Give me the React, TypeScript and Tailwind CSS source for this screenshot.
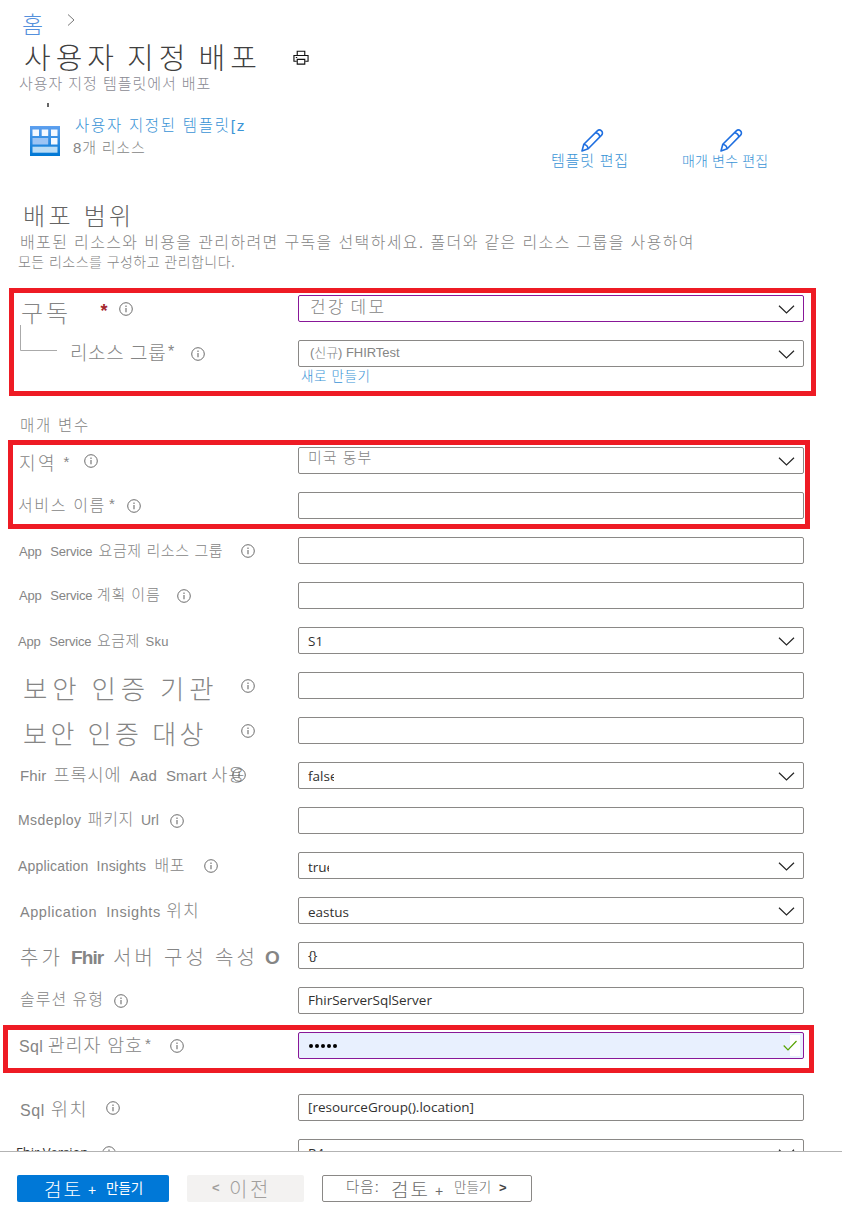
import React from "react";

type NodeProps = { children?: React.ReactNode; cls?: string };

function Txt({ children, cls = "" }: NodeProps) {
  return <span className={"block shrink-0 whitespace-pre leading-[20px] " + cls}>{children}</span>;
}

function Info({ cls = "" }: { cls?: string }) {
  return (
    <svg className={"size-[14px] shrink-0 " + cls} viewBox="0 0 14 14" fill="none">
      <circle cx="7" cy="7" r="6.3" stroke="#6c6c6c" strokeWidth="1" />
      <path d="M7 6v4.300M7 3.600v1.300" stroke="#6c6c6c" strokeWidth="1.100" />
    </svg>
  );
}

function Pencil({ cls = "" }: { cls?: string }) {
  return (
    <svg className={"h-[23px] w-[23px] shrink-0 " + cls} viewBox="0 0 23 23" fill="none" stroke="#1f6fe0" strokeWidth="1.600" strokeLinejoin="round">
      <path d="M1 22l1.800-6.800L16.300 1.900c1.200-1.200 3-1.100 4.200 0s1.300 3 .1 4.200L7.200 19.800z" />
      <path d="M14.500 3.800c2.600.4 4 1.800 4.300 4.200M2.800 15.200c2.600.5 4 2 4.400 4.600" />
    </svg>
  );
}

function Field({ children, select, cls = "border-[#8a8886]" }: NodeProps & { select?: boolean }) {
  return (
    <div className={"flex h-[27px] w-[506px] shrink-0 items-start rounded-[2px] border pl-[9px] font-['Open_Sans','Liberation_Sans',sans-serif] font-normal text-[#323130] " + cls}>
      <div className="flex min-w-0 grow">{children}</div>
      {select && (
        <svg className="mt-[9px] mr-[8px] h-[9px] w-[17px] shrink-0" viewBox="0 0 17 9" fill="none">
          <path d="M1 .8l7.500 7.200L16 .8" stroke="#252525" strokeWidth="1.200" />
        </svg>
      )}
    </div>
  );
}

function Row({ label, children, cls = "h-[45px]" }: NodeProps & { label?: React.ReactNode }) {
  return (
    <div className={"flex shrink-0 items-start " + cls}>
      <div className="flex w-[298px] shrink-0 items-start">{label}</div>
      {children}
    </div>
  );
}

const kr = "font-['Liberation_Sans','Noto_Sans_CJK_KR',sans-serif]";

export default function App() {
  return (
    <div className={"flex h-[1222px] w-[842px] flex-col overflow-hidden bg-white font-light text-[#858585] " + kr}>
      <main className="relative flex h-[1151px] shrink-0 flex-col overflow-hidden">
        <nav className="flex h-[40px] shrink-0 items-start pl-[22px]">
          <Txt cls="mt-[15px] w-[45px] text-[23px] text-[#5590dc]">홈</Txt>
          <svg className="mt-[14px] h-[12px] w-[8px]" viewBox="0 0 8 12" fill="none">
            <path d="M1 .5L7 6l-6 5.500" stroke="#777" />
          </svg>
        </nav>
        <header className="h-[78px] shrink-0">
          <div className="flex h-[34px] items-start">
            <Txt cls="mt-[9px] ml-[24px] w-[269px] text-[29px] tracking-[5px] text-[#404040] [word-spacing:-5px]">사용자 지정 배포</Txt>
            <svg className="mt-[10px] h-[16px] w-[16px]" viewBox="0 0 17 16" fill="none" stroke="#111" strokeWidth="1.200">
              <path d="M4.500 5V.8h8V5M4 11.500H1V5.400h15v6.100h-3" />
              <path d="M4.500 9.500h8v5h-8zM3 7.500h1.500" />
            </svg>
          </div>
          <Txt cls="ml-[19px] text-[15px] tracking-[0.950px] text-[#8a8a93]">사용자 지정 템플릿에서 배포</Txt>
          <div className="mt-[9px] ml-[47px] h-[4px] w-[2px] bg-[#666]" />
        </header>
        <section className="flex h-[80px] shrink-0 items-start">
          <svg className="mt-[8px] ml-[30px] h-[30px] w-[30px] shrink-0" viewBox="0 0 30 30">
            <defs>
              <linearGradient id="tile" x1="0" y1="0" x2="0" y2="1">
                <stop offset="0" stopColor="#5ea0ef" />
                <stop offset="1" stopColor="#0078d4" />
              </linearGradient>
            </defs>
            <rect width="30" height="30" fill="url(#tile)" />
            <path d="M2.500 3.500h6.500v6.500h-6.500zM11.700 3.500h6.500v6.500h-6.500zM21 3.500h6.500v6.500h-6.500zM21 12h6.500v6.500h-6.500z" fill="#f5f9ff" />
            <path d="M2.500 12h15.700v6.500H2.500z" fill="#9cc4f4" />
            <path d="M2.500 20.700h25v6H2.500z" fill="#b9dcf6" />
          </svg>
          <div className="ml-[15px] w-[475px] shrink-0">
            <Txt cls="-mt-[2px] text-[15.500px] tracking-[1.700px] text-[#3a94d6]">사용자 지정된 템플릿[z</Txt>
            <Txt cls="mt-[2px] -ml-[2px] text-[15px] tracking-[0.800px]">8개 리소스</Txt>
          </div>
          <div className="mt-[11px] w-[132px] shrink-0">
            <Pencil cls="ml-[31px]" />
            <Txt cls="-mt-px ml-px text-[15px] tracking-[0.800px] text-[#3a94d6]">템플릿 편집</Txt>
          </div>
          <div className="mt-[11px] shrink-0">
            <Pencil cls="ml-[38px]" />
            <Txt cls="-mt-px text-[14px] tracking-[0.150px] text-[#3a94d6]">매개 변수 편집</Txt>
          </div>
        </section>
        <section className="h-[97px] shrink-0 pt-[9px]">
          <Txt cls="ml-[23px] text-[24px] tracking-[3.300px] text-[#646464]">배포 범위</Txt>
          <Txt cls="mt-[6px] ml-[20px] text-[16px] tracking-[1.360px]">배포된 리소스와 비용을 관리하려면 구독을 선택하세요. 폴더와 같은 리소스 그룹을 사용하여</Txt>
          <Txt cls="-mt-px ml-[18px] text-[14px] tracking-[0.450px]">모든 리소스를 구성하고 관리합니다.</Txt>
        </section>

        <section className="relative h-[121px] shrink-0">
          <svg className="absolute top-[30px] left-[20px] h-[27px] w-[38px]" viewBox="0 0 38 27" fill="none">
            <path d="M.5 0v25.500H37" stroke="#aaa" />
          </svg>
          <Row label={<>
            <Txt cls="mt-[9px] ml-[21px] w-[79.500px] text-[24px] tracking-[3px]">구독</Txt>
            <Txt cls="mt-[6px] w-[18.500px] text-[18px] font-bold text-[#a4262c]">*</Txt>
            <Info cls="mt-[7px]" />
          </>}>
            <Field select cls="border-[#881798]"><Txt cls={"mt-[2px] ml-[2px] text-[17px] font-light tracking-[2.200px] text-[#858585] [word-spacing:-2px] " + kr}>건강 데모</Txt></Field>
          </Row>
          <Row cls="h-[27px]" label={<>
            <Txt cls="mt-[4px] ml-[70px] w-[98px] text-[19px] tracking-[0.600px]">리소스 그룹</Txt>
            <Txt cls="mt-[2px] w-[23px] text-[16px]">*</Txt>
            <Info cls="mt-[7px]" />
          </>}>
            <Field select><Txt cls={"mt-[2px] ml-[2px] text-[13px] font-light tracking-[-0.050px] text-[#858585] " + kr}>(신규) FHIRTest</Txt></Field>
          </Row>
          <Txt cls="ml-[301px] text-[13.500px] tracking-[0.600px] text-[#3a94d6]">새로 만들기</Txt>
        </section>

        <Txt cls="mb-[11px] ml-[20px] text-[15.500px] tracking-[1.700px]">매개 변수</Txt>

        <section className="flex shrink-0 flex-col">
          <Row label={<>
            <Txt cls="mt-[7px] ml-[19px] w-[44.500px] text-[18px] tracking-[2.500px]">지역</Txt>
            <Txt cls="mt-[5px] w-[20px] text-[15px]">*</Txt>
            <Info cls="mt-[7px]" />
          </>}>
            <Field select><Txt cls={"text-[15px] font-light tracking-[1px] text-[#858585] " + kr}>미국 동부</Txt></Field>
          </Row>
          <Row label={<>
            <Txt cls="mt-[4px] ml-[18px] w-[91px] text-[16px] tracking-[1.650px]">서비스 이름</Txt>
            <Txt cls="mt-[2px] w-[18px] text-[15px]">*</Txt>
            <Info cls="mt-[7px]" />
          </>}><Field /></Row>
          <Row label={<>
            <Txt cls="mt-[4px] ml-[19px] w-[222px] text-[15px] tracking-[0.600px]"><span className="-mr-[3px] text-[13px] tracking-[-0.200px] [word-spacing:1px]">App  Service </span> 요금제 리소스 그룹</Txt>
            <Info cls="mt-[7px]" />
          </>}><Field /></Row>
          <Row label={<>
            <Txt cls="mt-[3px] ml-[19px] w-[157.500px] text-[15px] tracking-[0.900px]"><span className="-mr-[5px] text-[13px] tracking-[-0.200px] [word-spacing:1px]">App  Service </span> 계획 이름</Txt>
            <Info cls="mt-[7px]" />
          </>}><Field /></Row>
          <Row label={<Txt cls="mt-[4px] ml-[18px] text-[15px] tracking-[0.500px]"><span className="-mr-[3.500px] text-[13px] tracking-[-0.200px] [word-spacing:1px]">App  Service </span> 요금제 <span className="ml-[1px] text-[13px] tracking-[0.300px]">Sku</span></Txt>}>
            <Field select><Txt cls="mt-[3px] h-[15px] overflow-hidden text-[13.500px]">S1</Txt></Field>
          </Row>
          <Row label={<>
            <Txt cls="mt-[8px] ml-[23px] w-[217.500px] text-[26.500px] tracking-[4.800px] [word-spacing:-2px]">보안 인증 기관</Txt>
            <Info cls="mt-[7px]" />
          </>}><Field /></Row>
          <Row label={<>
            <Txt cls="mt-[8px] ml-[23px] w-[217.500px] text-[26px] tracking-[3.500px] [word-spacing:-1px]">보안 인증 대상</Txt>
            <Info cls="mt-[7px]" />
          </>}><Field /></Row>
          <Row label={<>
            <Txt cls="mt-[3px] ml-[20px] w-[212px] text-[17.500px] tracking-[0.900px]"><span className="mr-[3px] text-[15px] tracking-[0.100px]">Fhir </span>프록시에<span className="ml-[4px] text-[15px] tracking-[0.200px]"> Aad  Smart </span>사용</Txt>
            <Info cls="mt-[6px]" />
          </>}>
            <Field select><Txt cls="mt-[3px] w-[26px] overflow-hidden text-[13.500px]">false</Txt></Field>
          </Row>
          <Row label={<>
            <Txt cls="mt-[3px] ml-[18px] w-[151.500px] text-[16px] tracking-[0.600px]"><span className="mr-[2px] text-[14px] tracking-[0.450px]">Msdeploy </span>패키지 <span className="ml-[2px] text-[14px] tracking-[0px]">Url</span></Txt>
            <Info cls="mt-[7px]" />
          </>}><Field /></Row>
          <Row label={<>
            <Txt cls="mt-[4px] ml-[18px] w-[185.500px] text-[16px] tracking-[0.600px]"><span className="text-[14px] tracking-[0.180px]">Application  Insights  </span>배포</Txt>
            <Info cls="mt-[7px]" />
          </>}>
            <Field select><Txt cls="mt-[4px] w-[21px] overflow-hidden text-[13.500px]">true</Txt></Field>
          </Row>
          <Row label={<Txt cls="mt-[5px] ml-[20px] text-[17px] tracking-[1px]"><span className="mr-[1px] text-[14.500px] tracking-[0.560px]">Application  Insights </span>위치</Txt>}>
            <Field select><Txt cls="mt-[4px] text-[13.500px]">eastus</Txt></Field>
          </Row>
          <Row label={<>
            <Txt cls="mt-[6px] ml-[20px] w-[51px] text-[20px] tracking-[3px]">추가</Txt>
            <Txt cls="mt-[6px] w-[42px] text-[19px] font-bold tracking-[-0.900px]">Fhir</Txt>
            <Txt cls="mt-[6px] w-[152px] text-[20px] tracking-[3.200px] [word-spacing:-1px]">서버 구성 속성</Txt>
            <Txt cls="mt-[6px] text-[19px] font-bold">O</Txt>
          </>}>
            <Field><Txt cls="mt-[2px] text-[13.500px] tracking-[-0.800px]">{"{}"}</Txt></Field>
          </Row>
          <Row label={<>
            <Txt cls="mt-[3px] ml-[20px] w-[94px] text-[16px] tracking-[1px]">솔루션 유형</Txt>
            <Info cls="mt-[7px]" />
          </>}>
            <Field><Txt cls="mt-[2px] text-[13.500px]">FhirServerSqlServer</Txt></Field>
          </Row>
          <Row cls="h-[62px]" label={<>
            <Txt cls="mt-[4px] ml-[19px] w-[126px] text-[18.500px] tracking-[0.800px]"><span className="text-[16px] tracking-[0.300px]">Sql </span>관리자 암호</Txt>
            <Txt cls="mt-[2px] w-[24.500px] text-[15px]">*</Txt>
            <Info cls="mt-[7px]" />
          </>}>
            <Field cls="border-[#881798] bg-[#e8f0fe]">
              <div className="mt-[11px] ml-[1px] flex grow gap-[2px]">
                <i className="size-[4px] rounded-full bg-black" />
                <i className="size-[4px] rounded-full bg-black" />
                <i className="size-[4px] rounded-full bg-black" />
                <i className="size-[4px] rounded-full bg-black" />
                <i className="size-[4px] rounded-full bg-black" />
              </div>
              <div className="mt-[2px] mr-[3px] flex h-[21px] w-[17px] bg-linear-to-r from-[#e8f0fe] from-[41%] to-white to-[41%]">
                <svg className="mt-[5px] h-[11px] w-[14px]" viewBox="0 0 14 11" fill="none">
                  <path d="M.7 5.500l4.300 4.300L13.500 1" stroke="#57a300" strokeWidth="1.200" />
                </svg>
              </div>
            </Field>
          </Row>
          <Row label={<>
            <Txt cls="mt-[6px] ml-[20px] w-[85.500px] text-[18.500px] tracking-[1.500px]"><span className="mr-[1px] text-[16px] tracking-[0.600px]">Sql </span>위치</Txt>
            <Info cls="mt-[7px]" />
          </>}>
            <Field><Txt cls="mt-[2px] text-[13.500px]">[resourceGroup().location]</Txt></Field>
          </Row>
          <Row label={<>
            <Txt cls="mt-[3px] ml-[16px] w-[86px] font-['Open_Sans',sans-serif] text-[13px] font-normal text-[#323130]">Fhir Version</Txt>
            <Info cls="mt-[7px]" />
          </>}>
            <Field select><Txt cls="mt-[3px] text-[13.500px]">R4</Txt></Field>
          </Row>
        </section>

        <div className="pointer-events-none absolute top-[288px] left-[9px] h-[108px] w-[807px] border-5 border-[#ee1b24]" />
        <div className="pointer-events-none absolute top-[440px] left-[8px] h-[89px] w-[802px] border-5 border-[#ee1b24]" />
        <div className="pointer-events-none absolute top-[1025px] left-[3px] h-[48px] w-[811px] border-5 border-[#ee1b24]" />
      </main>

      <footer className="flex h-[71px] shrink-0 items-start gap-[18px] border-t border-[#b3b3b3] pt-[23px] pl-[17px]">
        <button className="flex h-[27px] w-[152px] items-start rounded-[2px] bg-[#0078d7] text-left text-white">
          <Txt cls="mt-[6px] ml-[27px] w-[44px] text-[19px] tracking-[2px]">검토</Txt>
          <Txt cls="mt-[5px] w-[18px] text-[14px]">+</Txt>
          <Txt cls="mt-[4px] text-[13.500px] font-normal">만들기</Txt>
        </button>
        <button className="flex h-[27px] w-[117px] items-start rounded-[2px] bg-[#f3f2f1] text-left text-[#a19f9d]">
          <Txt cls="mt-[3px] ml-[25px] w-[17px] text-[13px] font-bold">&lt;</Txt>
          <Txt cls="mt-[5px] text-[20px] tracking-[2.500px]">이전</Txt>
        </button>
        <button className="flex h-[27px] w-[210px] items-start rounded-[2px] border border-[#8a8886] text-left text-[#6b6b6b]">
          <Txt cls="mt-[1px] ml-[23px] w-[45px] text-[14.500px] tracking-[1px]">다음:</Txt>
          <Txt cls="mt-[5px] w-[44px] text-[19px] tracking-[2px]">검토</Txt>
          <Txt cls="mt-[5px] w-[19px] text-[14px]">+</Txt>
          <Txt cls="mt-[2px] w-[45px] text-[13.500px]">만들기</Txt>
          <Txt cls="mt-[2px] text-[13px] font-bold text-[#444]">&gt;</Txt>
        </button>
      </footer>
    </div>
  );
}
